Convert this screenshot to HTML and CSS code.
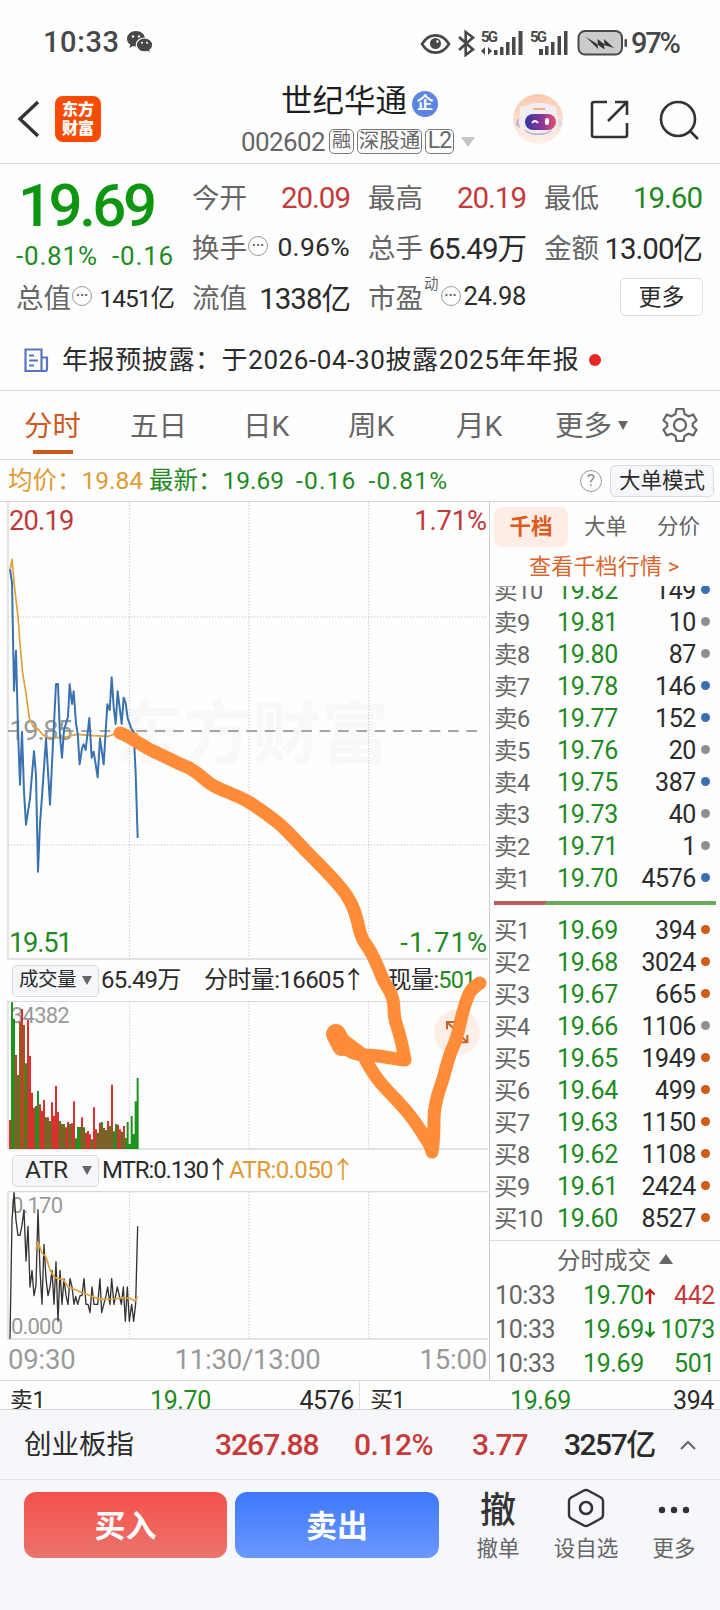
FILE: index.html
```html
<!DOCTYPE html>
<html lang="zh-CN">
<head>
<meta charset="UTF-8">
<meta name="viewport" content="width=device-width, initial-scale=1.0">
<title>世纪华通 002602</title>
<link rel="stylesheet" href="styles.css">
</head>
<body>
<div class="status-bar">
    <span class="clock">10:33</span>
    <svg class="wechat" width="26" height="23" viewBox="0 0 26 23">
        <path fill="#484848" d="M9 0C4 0 0 3.500 0 7.700c0 2.400 1.200 4.500 3.200 5.900L2.500 17l3.400-1.900c1.200.3 2 .4 3.100.4 5 0 9-3.500 9-7.800S14 0 9 0z"/>
        <path fill="#484848" stroke="#fefefe" stroke-width="1.200" d="M17.500 7c4.600 0 8.200 3 8.200 6.900 0 2.200-1.200 4-2.800 5.200l.6 3-3-1.600c-1 .3-2 .4-3 .4-4.600 0-8.200-3.100-8.200-7S12.900 7 17.500 7z"/>
        <g fill="#fff"><circle cx="6" cy="5.500" r="1.200"/><circle cx="12" cy="5.500" r="1.200"/><circle cx="15" cy="11.700" r="1"/><circle cx="20" cy="11.700" r="1"/></g>
    </svg>
    <svg class="status-icons" width="208" height="28" viewBox="421 28 208 28">
        <path d="M423 43c7-11.500 20-11.500 27 0-7 11.500-20 11.500-27 0z" fill="none" stroke="#484848" stroke-width="2.600"/>
        <circle cx="436.500" cy="42.500" r="5.500" fill="#484848"/>
        <circle cx="438.500" cy="40.500" r="1.200" fill="#fff"/>
        <path d="M460 36l14 12.500-7.300 5.500V31l7.300 5.500L460 49" fill="none" stroke="#484848" stroke-width="2.600"/>
        <g fill="#484848">
            <text x="482" y="41" class="net" textLength="17">5G</text>
            <text x="531" y="41" class="net" textLength="17">5G</text>
            <path d="M482 50l4-4v8zM493 50l-4-4v8z"/>
            <path d="M495 49h3.500v5H495zM501 46h3.500v8H501zM507 41h3.500v13H507zM513 36h3.500v18H513zM519.500 30h4v24h-4z"/>
            <path d="M540 48h4v6h-4zM546 45h3.500v9H546zM552 41h3.500v13H552zM558.500 35h3.500v19h-3.500zM565 30h3.500v24H565z"/>
            <rect x="625.500" y="38" width="2.500" height="8" rx="1"/>
        </g>
        <rect x="579.500" y="30" width="43.500" height="23.500" rx="6.500" fill="#cbcbcb" stroke="#484848" stroke-width="2"/>
        <path d="M587 36l12 7.500-.5-5.500 7 5.500-.5-5.500 10 9-10-3 .5 4.500-7-5 .5 4.500z" fill="#333"/>
    </svg>
    <span class="power">97%</span>
</div>

<div class="header">
    <svg class="back" width="23" height="38" viewBox="0 0 23 38"><path d="M21 2L3 19l18 17" fill="none" stroke="#333" stroke-width="3.400"/></svg>
    <div class="logo">东方<br>财富</div>
    <div class="stock">
        <div class="name">世纪华通<span class="badge">企</span></div>
        <div class="code"><span class="digits">002602</span><span class="tag rong">融</span><span class="tag sgt">深股通</span><span class="tag l2">L2</span><i class="tri-down light"></i></div>
    </div>
    <svg class="robot" width="50" height="50" viewBox="0 0 50 50">
        <defs><linearGradient id="visor"><stop offset="0" stop-color="#35379a"/><stop offset=".55" stop-color="#8c3598"/><stop offset="1" stop-color="#e05464"/></linearGradient>
        <linearGradient id="halo" x2="0" y2="1"><stop offset="0" stop-color="#fdc9af"/><stop offset="1" stop-color="#fff1eb"/></linearGradient></defs>
        <circle cx="25" cy="25" r="25" fill="url(#halo)"/>
        <circle cx="8" cy="29" r="5" fill="#bbb9c4"/><circle cx="45" cy="29" r="4" fill="#dddce3"/>
        <path d="M7 13l6-1c7-4 19-4 24-1l6 2 1 10c4 9-1 17-18 17S3 33 7 22z" fill="#f0eef2"/>
        <path d="M11 35c7 6 22 6 28 0-2 8-25 8-28 0z" fill="#b9b2c5"/>
        <rect x="12" y="20" width="31" height="16" rx="8" fill="url(#visor)"/>
        <path d="M19 29q3-4 6 0" fill="none" stroke="#fff" stroke-width="2"/><rect x="32" y="24" width="4" height="7" rx="2" fill="#fff"/>
        <path d="M20 15h12" stroke="#eeb084" stroke-width="2"/>
    </svg>
    <svg class="share" width="40" height="40" viewBox="0 0 40 40"><path d="M17 2H4Q2 2 2 4v31q0 2 2 2h31q2 0 2-2V23M25 2h12v13M37 2L18 21" fill="none" stroke="#333" stroke-width="2.600"/></svg>
    <svg class="search" width="40" height="40" viewBox="0 0 40 40"><circle cx="19" cy="19" r="17" fill="none" stroke="#333" stroke-width="2.600"/><path d="M31 31l8 8" stroke="#333" stroke-width="2.600"/></svg>
</div>

<div class="quote">
    <div class="last green">
        <div class="price">19.69</div>
        <div class="change"><span>-0.81%</span><span>-0.16</span></div>
    </div>
    <div class="cell"><label>今开</label><b class="red">20.09</b></div>
    <div class="cell"><label>最高</label><b class="red">20.19</b></div>
    <div class="cell"><label>最低</label><b class="green">19.60</b></div>
    <div class="cell"><label>换手<i class="dots">···</i></label><b class="mid">0.96%</b></div>
    <div class="cell"><label>总手</label><b>65.49万</b></div>
    <div class="cell"><label>金额</label><b>13.00亿</b></div>
    <div class="cell"><label>总值<i class="dots">···</i></label><b class="tiny">1451亿</b></div>
    <div class="cell"><label>流值</label><b>1338亿</b></div>
    <div class="cell"><label>市盈<sup>动</sup><i class="dots">···</i></label><b class="small">24.98</b></div>
    <div class="cell end"><button class="more">更多</button></div>
</div>

<div class="notice">
    <svg width="25" height="25" viewBox="0 0 25 25"><path d="M1.500 1.500h16v21.500h-16zM17.500 9.500h5.500V21q0 2-2 2h-4M5 7.500h5M5 12.500h9M5 17.500h5" fill="none" stroke="#5674c6" stroke-width="2.200"/></svg>
    <span class="notice-text">年报预披露：于2026-04-30披露2025年年报</span>
    <i class="red-dot"></i>
</div>

<div class="tabs">
    <span class="tab active">分时</span>
    <span class="tab">五日</span>
    <span class="tab">日K</span>
    <span class="tab">周K</span>
    <span class="tab">月K</span>
    <span class="tab">更多<i class="tri-down"></i></span>
    <svg width="36" height="36" viewBox="0 0 36 36"><path d="M14.500 2h7l1 5 4 2.300 4.800-1.700 3.200 5.600-3.700 3.300v3l3.700 3.300-3.200 5.600-4.800-1.700-4 2.300-1 5h-7l-1-5-4-2.300-4.800 1.700-3.200-5.600 3.700-3.300v-3l-3.700-3.300 3.200-5.600 4.800 1.700 4-2.300z" fill="none" stroke="#666" stroke-width="2.200"/><circle cx="18" cy="18" r="6" fill="none" stroke="#666" stroke-width="2.400"/></svg>
</div>

<div class="summary">
    <span class="orange avg">均价：<em>19.84</em></span>
    <span class="green">最新：<em>19.69</em><em class="gap">-0.16</em><em class="gap">-0.81%</em></span>
    <i class="help">?</i>
    <button class="mode">大单模式</button>
</div>

<div class="main">
    <div class="charts">
        <svg class="price-chart" width="489" height="458" viewBox="0 -84 1467 1374">
            <text x="343" y="684" class="watermark" textLength="825">东方财富</text>
            <path class="frame" d="M24 -84V1287H1463"/>
            <path class="grid" d="M388 -84V1287M747 -84V1287M1106 -84V1287M24 261H1463M24 945H1463"/>
            <path class="zero" d="M24 603H1436"/>
            <text x="28" y="629" class="axis mid" textLength="190">19.85</text>
            <polyline class="line avg-line" points="30,120 36,88 44,175 54,260 60,340 68,430 78,490 88,565 100,590 115,598 126,612 140,622 190,623 230,613 280,617 325,619 350,610 395,606 413,612"/>
            <polyline class="line price-line" points="30,118 36,158 42,482 48,362 54,600 60,764 66,605 72,785 78,884 90,805 102,664 108,735 114,1025 120,880 126,800 138,625 150,824 158,660 168,462 174,462 180,620 186,683 192,600 204,560 209,463 216,522 221,484 228,580 233,610 239,703 246,655 251,643 257,660 268,564 275,683 281,665 293,742 300,625 311,703 322,523 329,540 335,442 341,530 347,582 353,484 365,582 371,503 377,520 383,565 395,598 401,605 407,730 413,924"/>
            <text x="27" y="0" class="axis red-text" textLength="196">20.19</text>
            <text x="1243" y="0" class="axis red-text" textLength="218">1.71%</text>
            <text x="27" y="1266" class="axis green-text" textLength="191">19.51</text>
            <text x="1201" y="1266" class="axis green-text" textLength="260">-1.71%</text>
        </svg>
        <div class="indicator">
            <button class="pick">成交量<i class="tri-down"></i></button>
            <span class="total">65.49万</span>
            <span class="minute">分时量:16605<i class="up">↑</i></span>
            <span class="now">现量:<em class="green">501</em></span>
        </div>
        <svg class="sub-chart" width="489" height="149" viewBox="0 183 1467 447">
            <path class="frame" d="M1463 184H24V627H1463"/>
            <path class="grid" d="M388 184V627M747 184V627M1106 184V627"/>
            <text x="33" y="248" class="axis tip" textLength="176">34382</text>
            <path class="bar up-bar" d="M30 627V540M48 627V345M66 627V207M84 627V240M90 627V348M96 627V458M102 627V503M120 627V493M126 627V513M132 627V480M144 627V532M156 627V487M162 627V527M168 627V438M174 627V516M186 627V552M198 627V562M204 627V545M216 627V550M222 627V484M246 627V532M258 627V578M264 627V573M270 627V583M282 627V502M288 627V568M300 627V548M312 627V564M324 627V543M336 627V434M354 627V554M360 627V568M372 627V558"/>
            <path class="bar down-bar" d="M36 627V187M42 627V237M54 627V405M78 627V370M108 627V498M114 627V453M138 627V532M150 627V543M180 627V543M192 627V552M210 627V552M228 627V595M234 627V561M240 627V561M252 627V562M276 627V598M294 627V578M306 627V546M318 627V570M330 627V558M342 627V574M348 627V552M366 627V575M378 627V594M383 627V546M389 627V612M395 627V528M401 627V582M407 627V484M413 627V414"/>
            <path class="bar mixed-bar" d="M60 627V245M72 627V255"/>
            <circle cx="1371" cy="277" r="69" fill="#fdefe7"/>
            <path d="M1341 268V246H1363M1341 246L1402 307M1380 307H1402V285" fill="none" stroke="#c8622a" stroke-width="6"/>
        </svg>
        <div class="indicator atr">
            <button class="pick">ATR<i class="tri-down"></i></button>
            <span class="mtr">MTR:0.130<i class="up">↑</i></span>
            <span class="orange">ATR:0.050<i class="up">↑</i></span>
        </div>
        <svg class="sub-chart" width="489" height="149" viewBox="0 752 1467 447">
            <path class="frame" d="M1463 754H24V1196H1463"/>
            <path class="grid" d="M388 754V1196M747 754V1196M1106 754V1196"/>
            <text x="33" y="818" class="axis tip" textLength="156">0.170</text>
            <text x="33" y="1181" class="axis tip" textLength="156">0.000</text>
            <polyline class="line atr-line" points="30,1195 36,840 42,757 48,840 54,885 60,885 66,855 72,808 78,962 84,858 90,1040 96,990 102,1066 108,1035 114,808 120,990 126,1092 132,912 138,1015 144,1066 150,1040 156,990 162,1092 168,964 174,1143 180,990 186,1092 192,1015 198,1066 204,1092 210,1015 216,1040 222,1092 227,1068 233,1092 240,1066 246,1066 252,1015 258,1092 264,1092 270,1117 276,1040 282,1092 293,1092 300,1015 305,1117 318,1066 323,1040 330,1092 335,1015 342,1092 352,1040 364,1092 370,1040 376,1143 382,1040 388,1143 395,1092 401,1143 407,1090 413,858"/>
            <polyline class="line avg-line" points="108,928 114,905 126,938 138,950 150,990 165,1012 190,1018 205,1040 235,1052 260,1062 285,1072 310,1077 340,1076 370,1072 390,1074 405,1082 413,1068"/>
        </svg>
        <div class="times"><span>09:30</span><span>11:30/13:00</span><span>15:00</span></div>
    </div>

    <div class="book">
        <div class="book-tabs"><span class="on">千档</span><span>大单</span><span>分价</span></div>
        <div class="book-link">查看千档行情 &gt;</div>
        <div class="levels asks">
            <div class="level"><span>卖10</span><b>19.82</b><em>149</em><i class="blue"></i></div>
            <div class="level"><span>卖9</span><b>19.81</b><em>10</em><i></i></div>
            <div class="level"><span>卖8</span><b>19.80</b><em>87</em><i></i></div>
            <div class="level"><span>卖7</span><b>19.78</b><em>146</em><i class="blue"></i></div>
            <div class="level"><span>卖6</span><b>19.77</b><em>152</em><i class="blue"></i></div>
            <div class="level"><span>卖5</span><b>19.76</b><em>20</em><i></i></div>
            <div class="level"><span>卖4</span><b>19.75</b><em>387</em><i class="blue"></i></div>
            <div class="level"><span>卖3</span><b>19.73</b><em>40</em><i></i></div>
            <div class="level"><span>卖2</span><b>19.71</b><em>1</em><i></i></div>
            <div class="level"><span>卖1</span><b>19.70</b><em>4576</em><i class="blue"></i></div>
        </div>
        <div class="ratio"></div>
        <div class="levels bids">
            <div class="level"><span>买1</span><b>19.69</b><em>394</em><i class="hot"></i></div>
            <div class="level"><span>买2</span><b>19.68</b><em>3024</em><i class="hot"></i></div>
            <div class="level"><span>买3</span><b>19.67</b><em>665</em><i class="hot"></i></div>
            <div class="level"><span>买4</span><b>19.66</b><em>1106</em><i></i></div>
            <div class="level"><span>买5</span><b>19.65</b><em>1949</em><i class="hot"></i></div>
            <div class="level"><span>买6</span><b>19.64</b><em>499</em><i class="hot"></i></div>
            <div class="level"><span>买7</span><b>19.63</b><em>1150</em><i class="hot"></i></div>
            <div class="level"><span>买8</span><b>19.62</b><em>1108</em><i class="hot"></i></div>
            <div class="level"><span>买9</span><b>19.61</b><em>2424</em><i class="hot"></i></div>
            <div class="level"><span>买10</span><b>19.60</b><em>8527</em><i class="hot"></i></div>
        </div>
        <div class="deals-title">分时成交<i class="tri-up"></i></div>
        <div class="deal"><span>10:33</span><b>19.70</b><svg width="12" height="18" viewBox="0 0 12 18"><path d="M6 17V3M1.500 7.500L6 3l4.500 4.500" fill="none" stroke="#c01f1f" stroke-width="2.400"/></svg><em class="red">442</em></div>
        <div class="deal"><span>10:33</span><b>19.69</b><svg width="12" height="18" viewBox="0 0 12 18"><path d="M6 1v14M1.500 10.500L6 15l4.500-4.500" fill="none" stroke="#1f8a1f" stroke-width="2.400"/></svg><em class="green">1073</em></div>
        <div class="deal"><span>10:33</span><b>19.69</b><em class="green">501</em></div>
    </div>
</div>

<div class="strip">
    <div class="side"><span>卖1</span><b>19.70</b><em>4576</em></div>
    <div class="side"><span>买1</span><b>19.69</b><em>394</em></div>
</div>

<div class="index-bar">
    <span class="index-name">创业板指</span>
    <b class="red point">3267.88</b>
    <b class="red pct">0.12%</b>
    <b class="red diff">3.77</b>
    <b class="amount">3257亿</b>
    <svg width="16" height="10" viewBox="0 0 16 10"><path d="M1 9l7-7 7 7" fill="none" stroke="#666" stroke-width="2"/></svg>
</div>

<div class="actions">
    <button class="buy">买入</button>
    <button class="sell">卖出</button>
    <div class="action cancel"><span class="glyph">撤</span><span>撤单</span></div>
    <div class="action fav"><svg width="38" height="40" viewBox="0 0 38 40"><path d="M16.500 2.700q2.500-1.400 5 0l12 6.500q2.500 1.400 2.500 4v13.600q0 2.600-2.500 4l-12 6.500q-2.500 1.400-5 0l-12-6.500q-2.500-1.400-2.500-4V13.200q0-2.600 2.500-4z" fill="none" stroke="#333" stroke-width="2.400"/><circle cx="19" cy="20" r="6" fill="none" stroke="#333" stroke-width="2.600"/></svg><span>设自选</span></div>
    <div class="action rest"><svg width="38" height="40" viewBox="0 0 38 40"><g fill="#333"><circle cx="7" cy="22" r="3.200"/><circle cx="19" cy="22" r="3.200"/><circle cx="31" cy="22" r="3.200"/></g></svg><span>更多</span></div>
</div>

<!-- hand-drawn arrow over the charts -->
<svg class="scribble" width="720" height="1610" viewBox="0 0 720 1610">
    <path d="M120 733C130 736 142 746 153 751S175 762 187 767 203 780 214 786 240 796 252 804 269 816 277 822 299 844 312 857 340 885 347 896 356 915 359 928 364 941 369 949 378 967 382 977 391 990 393 1000 393 1014 396 1023 402 1043 405 1060C393 1059 379 1055 366 1055S348 1050 341 1045L334 1033 363 1055C369 1067 376 1079 387 1090S413 1118 421 1131 431 1145 432 1152C434 1141 434 1131 434 1119S436 1099 441 1085 447 1060 453 1047 459 1025 464 1008 471 989 480 983"/>
    <path d="M336 1034L342 1046" class="blob"/>
</svg>
</body>
</html>
```
FILE: styles.css
```css
* {
    box-sizing: border-box;
}
body {
    margin: 0;
    position: relative;
    width: 720px;
    height: 1610px;
    overflow: hidden;
    background: #fefefe;
    color: #2b2b2b;
    font-family: Roboto, "Noto Sans CJK SC", sans-serif;
}
b, em, i {
    font-weight: normal;
    font-style: normal;
}
button {
    font-family: inherit;
    color: inherit;
    padding: 0;
}
svg {
    display: block;
    flex: none;
}
.red { color: #c63a3a; }
.green { color: #1f8a1f; }
.orange { color: #e09a35; }
.tri-down, .tri-up {
    display: inline-block;
    border: 5px solid transparent;
    border-top: 9px solid #666;
    border-bottom: 0;
}
.tri-down.light {
    border-width: 10px 7px 0;
    border-top-color: #c4c4c4;
}
.tri-up {
    border: 7px solid transparent;
    border-top: 0;
    border-bottom: 10px solid #666;
}

/* status bar */
.status-bar {
    display: flex;
    align-items: center;
    height: 85px;
    padding-left: 43px;
    color: #484848;
}
.clock {
    width: 84px;
    font-size: 29px;
    font-weight: 500;
    line-height: 85px;
    letter-spacing: 0.6px;
}
.status-icons {
    margin-left: 267px;
}
.net {
    font-size: 15px;
    font-weight: 700;
}
.power {
    margin-left: 3px;
    font-size: 29px;
    font-weight: 500;
    letter-spacing: -2.2px;
}

/* title */
.header {
    display: flex;
    align-items: center;
    height: 79px;
    padding: 0 19px 11px 17px;
    border-bottom: 1px solid #d6d6d6;
}
.logo {
    width: 46px;
    height: 46px;
    margin-left: 15px;
    padding-top: 4px;
    border-radius: 8px;
    background: #f84b04;
    color: #fff;
    font-size: 16px;
    font-weight: 900;
    line-height: 19px;
    text-align: center;
}
.stock {
    width: 260px;
    margin-left: 130px;
    padding-left: 10px;
}
.name {
    display: flex;
    align-items: center;
    height: 40px;
    padding: 0 0 5px 40px;
    font-size: 31.5px;
    line-height: 35px;
    color: #1e1e1e;
    margin-top: 5px;
}
.badge {
    width: 26px;
    height: 26px;
    margin-left: 5px;
    margin-top: 4px;
    border-radius: 50%;
    background: #5b85e0;
    color: #fff;
    font-size: 17px;
    font-weight: 700;
    line-height: 25px;
    text-align: center;
}
.code {
    display: flex;
    align-items: center;
    height: 34px;
    padding-top: 1px;
    color: #666;
    font-size: 26px;
}
.digits {
    width: 88px;
    letter-spacing: -0.6px;
}
.tag {
    height: 25px;
    margin-right: 3px;
    border: 1.500px solid #777;
    border-radius: 5px;
    font-size: 20.5px;
    line-height: 22px;
    text-align: center;
    white-space: nowrap;
}
.rong { width: 25px; font-size: 19px; }
.sgt { width: 65px; }
.l2 { width: 29px; font-size: 23px; letter-spacing: -1px; }
.code .tri-down { margin-left: 4px; }
.robot { margin: 1px 0 0 22px; }
.share { margin: 2px 0 0 27px; }
.search { margin: 2px 0 0 29px; }

/* quote grid */
.quote {
    display: grid;
    grid-template-columns: repeat(4, 158px);
    grid-template-rows: repeat(3, 50px);
    column-gap: 18px;
    height: 158px;
    padding: 8px 0 0 16px;
}
.last {
    grid-row: span 2;
}
.price {
    height: 67px;
    font-size: 60px;
    font-weight: 500;
    line-height: 68px;
    letter-spacing: -3.500px;
    padding-left: 2px;
    color: #0f9610;
}
.change {
    display: flex;
    justify-content: space-between;
    font-size: 26px;
    line-height: 34px;
    letter-spacing: 0.8px;
}
.cell {
    display: flex;
    align-items: center;
    justify-content: space-between;
    margin-top: -2px;
    white-space: nowrap;
}
.cell label {
    display: flex;
    align-items: center;
    color: #666;
    font-size: 27.5px;
}
.cell b {
    font-size: 29.5px;
    letter-spacing: -1px;
}
.cell b.red, .cell b.green { margin-top: 3px; }
.cell .mid { font-size: 26.5px; letter-spacing: 0.3px; }
.cell .small { font-size: 25.5px; letter-spacing: -0.3px; }
.cell .tiny { font-size: 24.5px; letter-spacing: -1px; }
.cell sup {
    font-size: 14.5px;
    line-height: 16px;
    margin: -22px 1px 0;
}
.dots {
    width: 20px;
    height: 20px;
    margin-left: 1px;
    border: 1.500px solid #999;
    border-radius: 50%;
    font-size: 14px;
    font-weight: 700;
    line-height: 17px;
    text-align: center;
}
.end { justify-content: flex-end; }
.more {
    width: 83px;
    height: 38px;
    margin: 2px -1px 0 0;
    border: 1px solid #ddd;
    border-radius: 5px;
    background: #fff;
    font-size: 23px;
    line-height: 33px;
}
.notice {
    display: flex;
    align-items: center;
    height: 69px;
    padding: 8px 0 0 24px;
    border-bottom: 1px solid #d6d6d6;
    font-size: 26px;
}
.notice-text {
    width: 534px;
    padding: 0 0 5px 13px;
    letter-spacing: 0.6px;
    white-space: nowrap;
}
.red-dot {
    width: 12px;
    height: 12px;
    margin-left: 6px;
    border-radius: 50%;
    background: #ea2525;
}

/* period tabs */
.tabs {
    display: grid;
    grid-template-columns: 106px 113px 105px 108px 99px 107px 36px;
    align-items: center;
    height: 69px;
    padding-left: 24px;
    border-bottom: 1px solid #d6d6d6;
    color: #666;
    font-size: 28.5px;
}
.tab {
    height: 68px;
    line-height: 72px;
    white-space: nowrap;
}
.tab .tri-down {
    margin-left: 6px;
    vertical-align: 6px;
}
.active {
    width: 58px;
    color: #cd5a1e;
    background: linear-gradient(#cd5a1e, #cd5a1e) center 59px / 40px 4px no-repeat;
}
.summary {
    display: flex;
    align-items: center;
    height: 42px;
    padding: 0 6px 0 8px;
    border-bottom: 1px solid #d6d6d6;
    font-size: 24.5px;
    line-height: 40px;
    white-space: nowrap;
}
.summary .avg { width: 141px; }
.summary em { letter-spacing: 0; }
.summary .gap { margin-left: 12px; letter-spacing: 1.2px; }
.summary .help {
    width: 22px;
    height: 22px;
    margin-left: auto;
    border: 1.500px solid #999;
    border-radius: 50%;
    color: #888;
    font-size: 17px;
    line-height: 19px;
    text-align: center;
}
.mode, .pick {
    border: 1px solid #d9dbe0;
    border-radius: 5px;
    background: #f6f7fa;
}
.mode {
    width: 104px;
    height: 32px;
    margin-left: 8px;
    font-size: 21.5px;
    line-height: 30px;
}

/* charts */
.main {
    display: flex;
    height: 879px;
    border-bottom: 1px solid #d6d6d6;
}
.charts {
    width: 490px;
    border-right: 1px solid #ccc;
}
.frame { fill: none; stroke: #d9d9d9; stroke-width: 4; }
.grid { stroke: #c8c8c8; stroke-width: 3; stroke-dasharray: 4 5; }
.zero { stroke: #888; stroke-width: 5; stroke-dasharray: 32 23; }
.line { fill: none; stroke-width: 5; stroke-linejoin: round; }
.price-line { stroke: #3a72b0; stroke-width: 6; }
.avg-line { stroke: #dfa03c; }
.atr-line { stroke: #333; stroke-width: 4; }
.bar { stroke-width: 6; }
.up-bar { stroke: #d93030; }
.down-bar { stroke: #1d931d; }
.mixed-bar { stroke: #8a621c; }
.axis { font-size: 82px; }
.axis.mid { fill: #999; }
.axis.tip { font-size: 66px; fill: #999; }
.red-text { fill: #bf3a3a; }
.green-text { fill: #1f8a1f; }
.watermark {
    font-size: 206px;
    font-weight: 700;
    fill: #f8f8f8;
}
.indicator {
    display: flex;
    align-items: center;
    height: 41px;
    padding-left: 12px;
    font-size: 24px;
    line-height: 36px;
    letter-spacing: -0.8px;
    white-space: nowrap;
}
.indicator span { padding-bottom: 1px; }
.pick {
    display: flex;
    align-items: center;
    justify-content: space-between;
    width: 87px;
    height: 32px;
    padding: 0 6px 1px 6px;
    font-size: 19.5px;
    line-height: 28px;
    letter-spacing: -0.5px;
}
.total { width: 105px; padding-left: 2px; }
.minute { width: 184px; letter-spacing: -0.6px; }
.now { font-size: 23.5px; }
.up {
    display: inline-block;
    width: 17px;
    font-family: "Noto Sans CJK SC", sans-serif;
    font-size: 24px;
    line-height: 30px;
    text-indent: -2px;
}
.atr .pick { padding-left: 12px; font-size: 24.5px; }
.mtr { width: 130px; padding-left: 3px; letter-spacing: -1.100px; }
.atr .orange { letter-spacing: -0.6px; }
.times {
    display: flex;
    justify-content: space-between;
    padding: 0 2px 0 8px;
    color: #999;
    font-size: 27.5px;
    line-height: 40px;
    letter-spacing: -0.2px;
}

/* order book */
.book {
    width: 230px;
}
.book-tabs {
    display: flex;
    align-items: center;
    gap: 2px;
    height: 46px;
    padding: 4px 0 0 4px;
    margin-bottom: 3px;
    color: #666;
    font-size: 21.5px;
}
.book-tabs span {
    width: 71px;
    line-height: 40px;
    text-align: center;
}
.book-tabs .on {
    width: 74px;
    border-radius: 8px;
    background: #feede5;
    color: #e0591c;
    font-weight: 700;
}
.book-link {
    height: 35px;
    padding-left: 39px;
    color: #d9642c;
    font-size: 22px;
    line-height: 32px;
    letter-spacing: 0.2px;
}
.levels {
    display: flex;
    flex-direction: column;
    overflow: hidden;
}
.asks {
    justify-content: flex-end;
    height: 309px;
}
.level {
    display: grid;
    flex: none;
    grid-template-columns: 63px 73px 66px 10px;
    align-items: center;
    height: 32px;
    padding-left: 4px;
    font-size: 25px;
    line-height: 32px;
    letter-spacing: -0.4px;
}
.level span {
    color: #666;
    font-size: 23.5px;
}
.level b, .deal b, .side b { color: #1f8a1f; }
.level em { text-align: right; }
.level i {
    width: 9px;
    height: 9px;
    margin: -4px 0 0 5px;
    border-radius: 50%;
    background: #8e8e93;
}
.level .blue { background: #3a70b0; }
.level .hot { background: #d35a14; }
.ratio {
    height: 4px;
    margin: 6px 4px 10px;
    background: linear-gradient(135deg, #c05c5c 38px, #6aaa5e 38px);
}
.deals-title {
    display: flex;
    align-items: center;
    gap: 8px;
    height: 39px;
    margin-top: 5px;
    padding: 0 0 3px 67px;
    border-top: 1px solid #ddd;
    color: #666;
    font-size: 23.5px;
}
.deal {
    display: grid;
    grid-template-columns: 88px 61px 14px 1fr;
    align-items: center;
    height: 34px;
    padding: 0 5px 0 5px;
    color: #666;
    font-size: 25px;
    line-height: 34px;
    letter-spacing: -0.4px;
}
.deal em { grid-column: 4; text-align: right; }

/* clipped order strip */
.strip {
    display: grid;
    grid-template-columns: 360px 360px;
    height: 29px;
    overflow: hidden;
    border-bottom: 1px solid #d6d6d6;
}
.side {
    display: grid;
    grid-template-columns: 140px 100px 104px;
    padding-left: 10px;
    height: 39px;
    border-right: 1px solid #ddd;
    font-size: 25px;
    line-height: 39px;
    letter-spacing: -0.4px;
}
.side:last-child { border-right: 0; }
.side span { font-size: 23px; }
.side em { text-align: right; }

/* bottom bars */
.index-bar {
    display: flex;
    align-items: center;
    height: 70px;
    padding-left: 24px;
    background: #f6f7fa;
    border-bottom: 1px solid #e0e1e4;
    font-size: 30px;
    line-height: 69px;
    letter-spacing: -1px;
    white-space: nowrap;
}
.index-bar b { font-weight: 500; }
.index-name { width: 191px; font-size: 27.5px; letter-spacing: 0; }
.point { width: 139px; }
.pct { width: 118px; letter-spacing: -0.5px; }
.diff { width: 92px; }
.amount { width: 116px; letter-spacing: -1.500px; }
.actions {
    display: flex;
    height: 131px;
    padding: 12px 0 0 24px;
    background: #f6f7fa;
}
.buy, .sell {
    width: 203px;
    height: 66px;
    margin-right: 8px;
    padding-bottom: 4px;
    border: 0;
    border-radius: 12px;
    background: linear-gradient(#f4514b, #ec736d);
    color: #fff;
    font-size: 31px;
    font-weight: 700;
}
.sell {
    width: 204px;
    background: linear-gradient(#3d77fa, #6b98ff);
}
.action {
    display: flex;
    flex-direction: column;
    align-items: center;
    width: 88px;
    color: #666;
    font-size: 21.5px;
    line-height: 32px;
}
.action svg { margin: -4px 0 5px; }
.glyph {
    height: 41px;
    color: #333;
    font-size: 36px;
    font-weight: 500;
    line-height: 38px;
}
.cancel { margin-left: 7px; }
.scribble {
    position: absolute;
    top: 0;
    left: 0;
    pointer-events: none;
    fill: none;
    stroke: #ff8c38;
    stroke-width: 13;
    stroke-linecap: round;
    stroke-linejoin: round;
}
.blob { stroke-width: 20; }
```
